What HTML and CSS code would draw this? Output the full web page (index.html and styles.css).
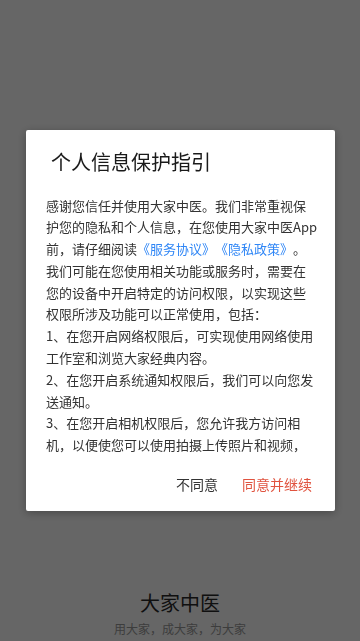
FILE: index.html
```html
<!DOCTYPE html>
<html lang="zh-CN">
<head>
    <meta charset="UTF-8">
    <meta name="viewport" content="width=device-width, initial-scale=1.0">
    <title>大家中医</title>
    <link rel="stylesheet" href="styles.css">
</head>
<body>
    <div class="splash">
        <div class="brand">大家中医</div>
        <div class="slogan">用大家，成大家，为大家</div>
    </div>

    <div class="mask">
        <div class="dialog">
            <h1 class="dialog-title">个人信息保护指引</h1>
            <div class="dialog-body">
                <p>感谢您信任并使用大家中医。我们非常重视保护您的隐私和个人信息，在您使用大家中医App前，请仔细阅读<a href="#">《服务协议》</a><a href="#">《隐私政策》</a>。</p>
                <p>我们可能在您使用相关功能或服务时，需要在您的设备中开启特定的访问权限，以实现这些权限所涉及功能可以正常使用，包括：</p>
                <p>1、在您开启网络权限后，可实现使用网络使用工作室和浏览大家经典内容。</p>
                <p>2、在您开启系统通知权限后，我们可以向您发送通知。</p>
                <p>3、在您开启相机权限后，您允许我方访问相机，以便使您可以使用拍摄上传照片和视频，更换头像。</p>
                <p>4、在您开启存储权限后，您允许我方访问相册，以便您上传图片。</p>
            </div>
            <div class="dialog-actions">
                <button class="btn btn-cancel">不同意</button>
                <button class="btn btn-ok">同意并继续</button>
            </div>
        </div>
    </div>
</body>
</html>
```

FILE: styles.css
```css
* {
    box-sizing: border-box;
}

body {
    margin: 0;
    height: 641px;
    background: #fff;
    font-family: "Noto Sans CJK SC", "Noto Sans", sans-serif;
    text-spacing-trim: space-all;
}

.splash {
    height: 100%;
    display: flex;
    flex-direction: column;
    align-items: center;
    justify-content: flex-end;
    padding-bottom: 4px;
}

.brand {
    font-size: 20px;
    line-height: 26px;
    color: #2a2a2a;
}

.slogan {
    margin-top: 5px;
    font-size: 12px;
    line-height: 16px;
    color: #999;
}

.mask {
    position: fixed;
    top: 0;
    left: 0;
    right: 0;
    bottom: 0;
    background: rgba(0, 0, 0, 0.6);
    display: flex;
    align-items: center;
    justify-content: center;
}

.dialog {
    width: 309px;
    height: 381px;
    margin-left: 1px;
    margin-top: -1px;
    background: #fff;
    border-radius: 2px;
    box-shadow: 0 2px 10px rgba(0, 0, 0, 0.3);
    display: flex;
    flex-direction: column;
}

.dialog-title {
    margin: 20px 0 0;
    padding-left: 25px;
    font-size: 20px;
    line-height: 24px;
    font-weight: normal;
    color: #1a1a1a;
}

.dialog-body {
    margin-top: 21px;
    height: 264px;
    padding: 0 17px 0 20px;
    overflow: hidden;
    font-size: 13px;
    line-height: 21.8px;
    color: #333;
}

.dialog-body p {
    margin: 0;
}

.dialog-body a {
    color: #2f86f6;
    text-decoration: none;
}

.dialog-actions {
    display: flex;
    justify-content: flex-end;
    gap: 24px;
    padding: 8px 23px 10px 0;
}

.btn {
    border: none;
    background: none;
    padding: 0;
    height: 34px;
    font-family: inherit;
    font-size: 14px;
    line-height: 34px;
}

.btn-cancel {
    color: #333;
}

.btn-ok {
    color: #e0533f;
}
```
